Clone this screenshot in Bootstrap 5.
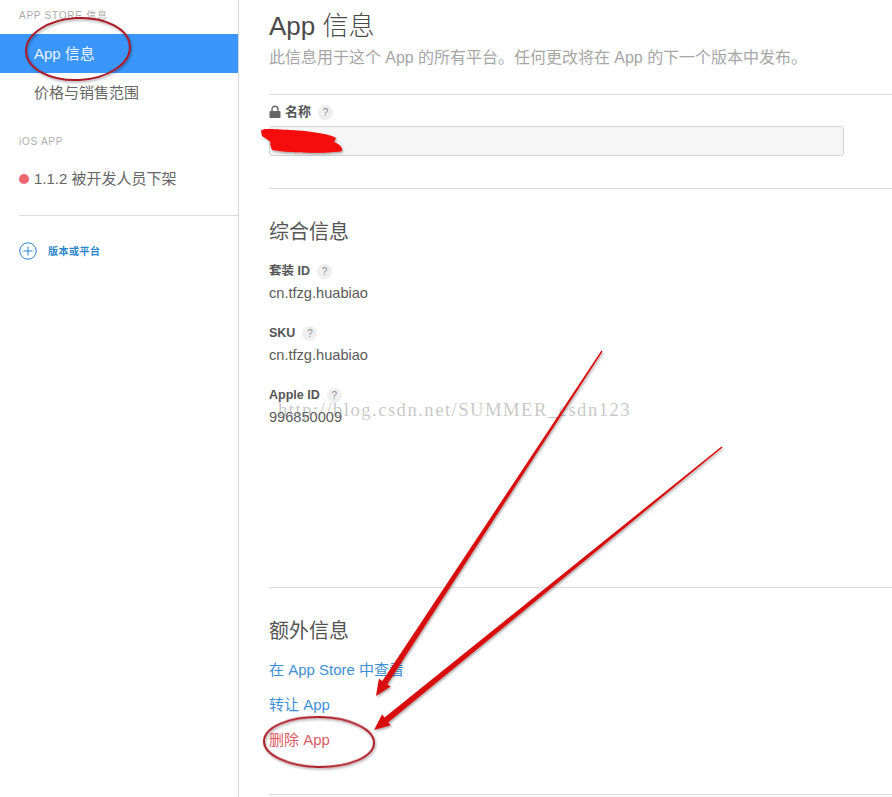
<!DOCTYPE html>
<html lang="zh">
<head>
<meta charset="utf-8">
<title>App 信息</title>
<link href="https://cdn.jsdelivr.net/npm/bootstrap@5.3.0/dist/css/bootstrap.min.css" rel="stylesheet">
<style>
html,body{height:797px;overflow:hidden;background:#fff}
body{font-family:"Liberation Sans","Noto Sans CJK SC",sans-serif;color:#555;font-size:14px;position:relative}
.shell{height:797px}
.side{width:239px;flex:none;border-right:1px solid #d9d9d9}
.side-h{font-size:10px;letter-spacing:.75px;color:#adadad;padding-left:19px;line-height:12px}
.side-item{display:block;height:39px;line-height:39px;padding-left:34px;font-size:15px;color:#666;text-decoration:none}
.side-item.on{background:#3b96fb;color:#e9f2ff;font-size:15px}
.dot{width:10px;height:10px;border-radius:50%;background:#ee6670;flex:none;margin-right:5px}
.side-rule{height:1px;background:#ddd;margin:0 0 0 19px}
.addv{color:#2d86cc;font-size:10px;font-weight:700;letter-spacing:.5px;text-decoration:none;padding-left:19px}
.add-txt{margin-left:3px}
.pane{flex:1;min-width:0;padding-left:30px}
.ttl{font-size:26px;line-height:30px;color:#4a4a4a;font-weight:300;margin:0;padding-top:11px}
.sub{font-size:16px;line-height:20px;color:#a6a6a6;margin:7px 0 0;letter-spacing:-.02px}
.rule{height:1px;background:#dcdcdc}
.lbl{font-size:12.5px;font-weight:700;color:#555;line-height:16px}
.lbl-cn{font-size:13px}
.qm{display:inline-block;width:15px;height:15px;border-radius:50%;background:#efefef;color:#8d8d8d;font-size:10px;line-height:15px;text-align:center;font-weight:400;margin-left:7px}
.fld{width:575px;height:30px;background:#f6f6f6;border:1px solid #d2d2d2;border-radius:3px}
.sec{font-size:20px;line-height:24px;color:#555;font-weight:400;margin:0}
.val{font-size:14.6px;line-height:20px;color:#5a5a5a}
.lnk{display:block;font-size:15px;line-height:20px;color:#3f8fd6;text-decoration:none}
.lnk.del{color:#dc5a62}
.mark-over{position:absolute;left:0;top:0;width:892px;height:797px;pointer-events:none}
.wm{position:absolute;left:278px;top:399px;font-family:"Liberation Serif",serif;font-size:18.6px;letter-spacing:1.5px;line-height:22px;color:rgba(120,120,120,.42);white-space:nowrap;pointer-events:none}
</style>
</head>
<body>
<div class="d-flex shell">
  <aside class="side">
    <div class="side-h" style="padding-top:10px">APP STORE 信息</div>
    <a href="#" class="side-item on" style="margin-top:12px">App 信息</a>
    <a href="#" class="side-item">价格与销售范围</a>
    <div class="side-h" style="margin-top:24px">iOS APP</div>
    <a href="#" class="side-item d-flex align-items-center" style="padding-left:19px;margin-top:11px">
      <span class="dot"></span><span>1.1.2 被开发人员下架</span>
    </a>
    <div class="side-rule" style="margin-top:17px"></div>
    <a href="#" class="addv d-flex align-items-center" style="margin-top:26px">
      <svg width="18" height="18" viewBox="0 0 18 18" class="me-2"><circle cx="9" cy="9" r="8.2" fill="none" stroke="#2a84cc" stroke-width="1"/><path d="M9 4.5v9M4.5 9h9" stroke="#2a84cc" stroke-width="1" fill="none"/></svg>
      <span class="add-txt">版本或平台</span>
    </a>
  </aside>
  <main class="pane">
    <h1 class="ttl">App 信息</h1>
    <p class="sub">此信息用于这个 App 的所有平台。任何更改将在 App 的下一个版本中发布。</p>
    <div class="rule" style="margin-top:26px"></div>
    <div class="lbl lbl-cn d-flex align-items-center" style="margin-top:9px">
      <svg width="12" height="14" viewBox="0 0 12 14" class="me-1"><path d="M3 6.5V4.2a3 3 0 0 1 6 0v2.3" fill="none" stroke="#666" stroke-width="1.4"/><path d="M1.5 6h9a1 1 0 0 1 1 1v5a1 1 0 0 1-1 1h-9a1 1 0 0 1-1-1V7a1 1 0 0 1 1-1z" fill="#666"/></svg>
      <span>名称</span><span class="qm">?</span>
    </div>
    <div class="fld" style="margin-top:6px"></div>
    <div class="rule" style="margin-top:32px"></div>
    <h2 class="sec" style="margin-top:31px">综合信息</h2>
    <div class="lbl" style="margin-top:19px">套装 ID<span class="qm">?</span></div>
    <div class="val" style="margin-top:4px">cn.tfzg.huabiao</div>
    <div class="lbl" style="margin-top:22px">SKU<span class="qm">?</span></div>
    <div class="val" style="margin-top:4px">cn.tfzg.huabiao</div>
    <div class="lbl" style="margin-top:22px">Apple ID<span class="qm">?</span></div>
    <div class="val" style="margin-top:4px">996850009</div>
    <div class="rule" style="margin-top:160px"></div>
    <h2 class="sec" style="margin-top:31px">额外信息</h2>
    <a href="#" class="lnk" style="margin-top:17px">在 App Store 中查看</a>
    <a href="#" class="lnk" style="margin-top:15px">转让 App</a>
    <a href="#" class="lnk del" style="margin-top:15px">删除 App</a>
    <div class="rule" style="margin-top:44px"></div>
  </main>
</div>
<div class="wm">http://blog.csdn.net/SUMMER_csdn123</div>
<svg class="mark-over" viewBox="0 0 892 797">
  <defs>
    <filter id="sh" x="-10%" y="-10%" width="120%" height="120%"><feDropShadow dx="1" dy="1.5" stdDeviation="1.2" flood-color="#000" flood-opacity=".35"/></filter>
  </defs>
  <g filter="url(#sh)">
    <path d="M261 131C262 128 270 129 290 130C310 131 330 134 336 138L334 142C339 144 343 147 342 151C330 154 290 153 272 150L270 144C273 142 265 138 262 136Z" fill="#f50808"/>
  </g>
  <g filter="url(#sh)" fill="none" stroke="#ac1a26" stroke-width="2">
    <ellipse cx="78" cy="49" rx="52" ry="31" transform="rotate(-3 78 49)"/>
    <ellipse cx="319" cy="742" rx="55" ry="25" transform="rotate(1 319 742)"/>
  </g>
  <g filter="url(#sh)">
    <path d="M601.4 350.6L602.6 351.4L387.3 684.3L390.7 686.4L376 696L378.9 678.8L382.3 680.9Z" fill="#d81010"/>
    <path d="M721.5 446.4L722.5 447.6L388.3 722.2L390.8 725.3L374 730L382 714.5L384.5 717.6Z" fill="#d81010"/>
  </g>
</svg>
<script src="https://cdn.jsdelivr.net/npm/bootstrap@5.3.0/dist/js/bootstrap.bundle.min.js"></script>
</body>
</html>
